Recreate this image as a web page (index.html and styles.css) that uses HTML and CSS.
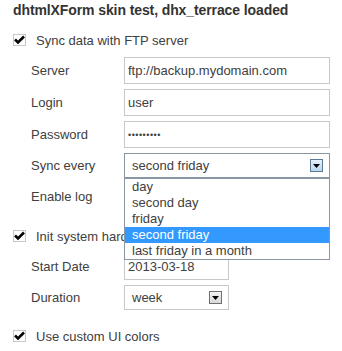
FILE: index.html
```html
<!DOCTYPE html>
<html lang="en">
<head>
    <meta charset="UTF-8">
    <meta name="viewport" content="width=device-width, initial-scale=1.0">
    <title>dhtmlXForm skin test</title>
    <link rel="stylesheet" href="styles.css">
</head>
<body>
    <div class="form">
        <div class="title">dhtmlXForm skin test, dhx_terrace loaded</div>

        <div class="check-row">
            <span class="check"><svg width="13" height="12" viewBox="0 0 13 12"><path d="M2 5.5 L5 8.5 L11 2.5" fill="none" stroke="#000" stroke-width="2.6"/></svg></span>
            <span class="check-label">Sync data with FTP server</span>
        </div>
        <div class="group">
            <div class="field">
                <label>Server</label>
                <input type="text" class="input wide" value="ftp://backup.mydomain.com">
            </div>
            <div class="field">
                <label>Login</label>
                <input type="text" class="input wide" value="user">
            </div>
            <div class="field">
                <label>Password</label>
                <input type="password" class="input wide pass" value="secretpw1">
            </div>
            <div class="field">
                <label>Sync every</label>
                <div class="select wide open">
                    <span class="select-text">second friday</span>
                    <span class="select-btn blue"><svg width="7" height="4" viewBox="0 0 7 4"><path d="M0 0 H7 L3.5 4 Z" fill="#000"/></svg></span>
                    <ul class="list">
                        <li>day</li>
                        <li>second day</li>
                        <li>friday</li>
                        <li class="active">second friday</li>
                        <li>last friday in a month</li>
                    </ul>
                </div>
            </div>
            <div class="field tall">
                <label>Enable log</label>
            </div>
        </div>

        <div class="check-row">
            <span class="check"><svg width="13" height="12" viewBox="0 0 13 12"><path d="M2 5.5 L5 8.5 L11 2.5" fill="none" stroke="#000" stroke-width="2.6"/></svg></span>
            <span class="check-label">Init system hardware</span>
        </div>
        <div class="group">
            <div class="field">
                <label>Start Date</label>
                <input type="text" class="input narrow" value="2013-03-18">
            </div>
            <div class="field">
                <label>Duration</label>
                <div class="select narrow">
                    <span class="select-text">week</span>
                    <span class="select-btn"><svg width="7" height="4" viewBox="0 0 7 4"><path d="M0 0 H7 L3.5 4 Z" fill="#000"/></svg></span>
                </div>
            </div>
        </div>

        <div class="check-row">
            <span class="check"><svg width="13" height="12" viewBox="0 0 13 12"><path d="M2 5.5 L5 8.5 L11 2.5" fill="none" stroke="#000" stroke-width="2.6"/></svg></span>
            <span class="check-label">Use custom UI colors</span>
        </div>
    </div>
</body>
</html>
```

FILE: styles.css
```css
body {
    margin: 0;
    background: #fff;
    font-family: Arial, "Liberation Sans", sans-serif;
    font-size: 13px;
    color: #404040;
}
.form {
    padding: 2px 0 0 13px;
}
.title {
    font-weight: bold;
    font-size: 14px;
    letter-spacing: -0.1px;
    color: #333;
    height: 16px;
    line-height: 16px;
}
.check-row {
    display: flex;
    align-items: center;
    height: 24px;
    margin-top: 10px;
}
.check {
    width: 13px;
    height: 12px;
    box-sizing: border-box;
    border: 1px solid #c8c8c8;
    position: relative;
}
.check svg {
    position: absolute;
    left: -1px;
    top: -1px;
}
.check-label {
    margin-left: 10px;
}
.group {
    display: flex;
    flex-direction: column;
    gap: 5px;
    padding: 5px 0 4px 18px;
}
.field {
    display: flex;
    align-items: center;
    min-height: 25px;
}
.field.tall {
    min-height: 27px;
}
.field label {
    width: 93px;
}
.input {
    height: 27px;
    box-sizing: border-box;
    border: 1px solid #c8c8c8;
    padding: 0 3px;
    font: inherit;
    color: #404040;
    margin: 0;
    outline: none;
}
.wide {
    width: 206px;
}
.narrow {
    width: 105px;
}
.pass {
    font-size: 9px;
    letter-spacing: 0.5px;
}
.select {
    position: relative;
    height: 25px;
    box-sizing: border-box;
    border: 1px solid #c8c8c8;
    display: flex;
    align-items: center;
    justify-content: space-between;
    padding: 0 6px 0 7px;
}
.select.open {
    border-color: #8a96a3;
}
.select-btn {
    width: 13px;
    height: 13px;
    box-sizing: border-box;
    border: 1px solid #707070;
    background: linear-gradient(#f4f4f4, #d8d8d8);
    display: flex;
    align-items: center;
    justify-content: center;
}
.select-btn.blue {
    border-color: #5c7a94;
    background: linear-gradient(#e6f2fb, #b8d8f0);
}
.list {
    position: absolute;
    left: -1px;
    top: 24px;
    width: 206px;
    box-sizing: border-box;
    margin: 0;
    padding: 0;
    list-style: none;
    background: #fff;
    border: 1px solid #8a96a3;
    z-index: 2;
}
.list li {
    height: 16px;
    line-height: 16px;
    padding-left: 7px;
}
.list li.active {
    background: #3399ff;
    color: #fff;
}
```
